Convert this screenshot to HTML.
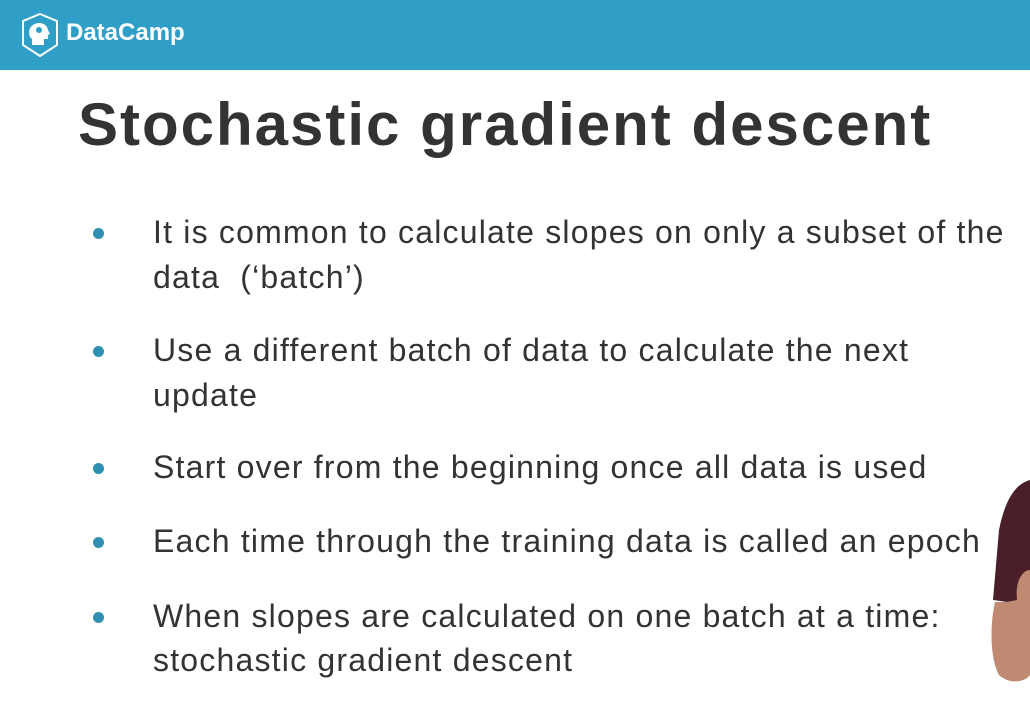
<!DOCTYPE html>
<html><head><meta charset="utf-8"><style>
body{margin:0;width:1030px;height:708px;overflow:hidden;background:#fff;position:relative;font-family:"Liberation Sans",sans-serif;}
.hdr{position:absolute;left:0;top:0;width:1030px;height:70px;background:#2f9fc8;}
.logo{position:absolute;left:66px;top:19px;color:#fff;font-weight:bold;font-size:24px;}
h1{position:absolute;left:78px;top:90px;margin:0;font-size:60px;font-weight:bold;color:#333;letter-spacing:2px;}
.t{position:absolute;left:153px;font-size:32px;color:#333;white-space:nowrap;line-height:36px;letter-spacing:1.2px;}
.d{position:absolute;left:93px;width:11px;height:11px;border-radius:50%;background:#2f8fb0;}
</style></head><body>
<div class="hdr">
<svg style="position:absolute;left:20px;top:12px" width="40" height="46" viewBox="0 0 40 46"><path d="M20 2 L37 9 V33 L20 44 L3 33 V9 Z" fill="none" stroke="#fff" stroke-width="2"/><path d="M12 33 V27 C8 24 8 16 13 13 C18 9 27 11 28 18 L30 22 L28 23 V27 H24 V33 Z" fill="#fff"/><circle cx="19" cy="18" r="3" fill="#2f9fc8"/></svg>
<div class="logo">DataCamp</div>
</div>
<h1>Stochastic gradient descent</h1>
<div class="d" style="top:228px"></div>
<div class="t" style="top:214px">It is common to calculate slopes on only a subset of the</div>
<div class="t" style="top:259px">data&nbsp; (‘batch’)</div>
<div class="d" style="top:346px"></div>
<div class="t" style="top:332px">Use a different batch of data to calculate the next</div>
<div class="t" style="top:377px">update</div>
<div class="d" style="top:463px"></div>
<div class="t" style="top:449px">Start over from the beginning once all data is used</div>
<div class="d" style="top:537px"></div>
<div class="t" style="top:523px">Each time through the training data is called an epoch</div>
<div class="d" style="top:612px"></div>
<div class="t" style="top:598px">When slopes are calculated on one batch at a time:</div>
<div class="t" style="top:642px">stochastic gradient descent</div>
<svg style="position:absolute;left:985px;top:470px" width="45" height="238" viewBox="0 0 45 238"><path d="M45 10 C30 14 20 30 14 60 L8 130 L22 132 L45 128 Z" fill="#4a1f2a"/><path d="M10 132 C4 160 6 190 14 205 C25 215 40 212 45 205 V100 C38 100 30 110 32 130 L22 132 Z" fill="#c08a72"/></svg>
</body></html>
